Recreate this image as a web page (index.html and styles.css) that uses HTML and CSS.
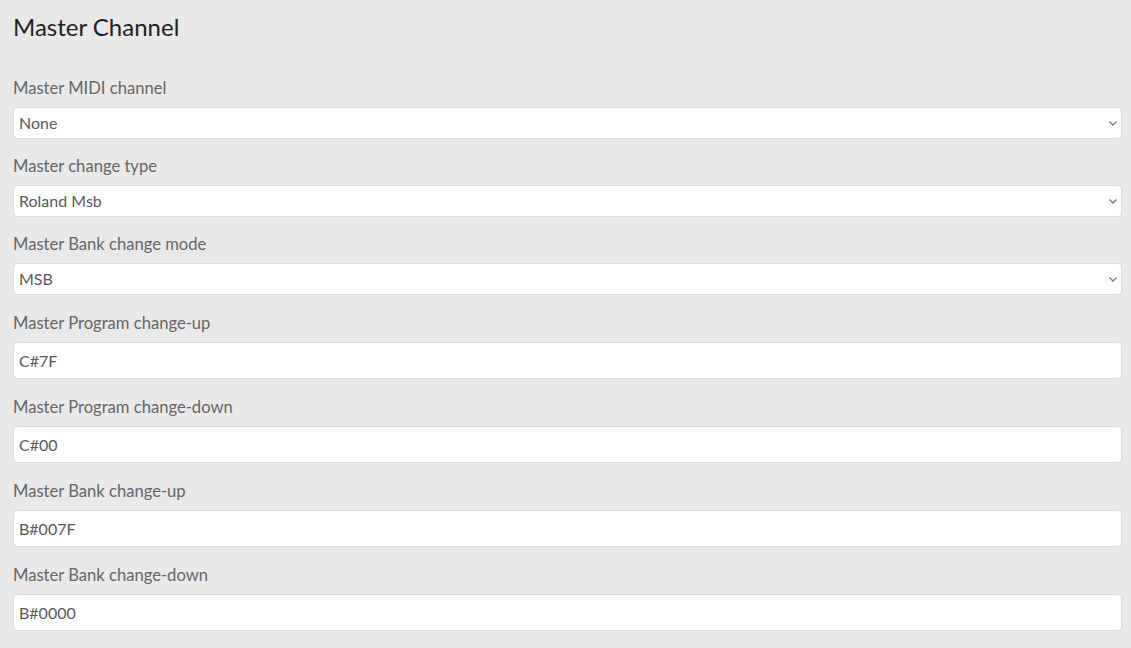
FILE: index.html
```html
<!DOCTYPE html>
<html lang="en">
<head>
<meta charset="utf-8">
<title>Master Channel</title>
<link rel="stylesheet" href="styles.css">
</head>
<body>
<main class="page">
  <h2 class="title">Master Channel</h2>

  <div class="field field-select">
    <label class="label" for="midi">Master MIDI channel</label>
    <div class="select-wrap">
      <select id="midi" class="control select"><option>None</option></select>
      <svg class="chevron" width="8" height="5" viewBox="0 0 8 5"><path d="M0.5 0.5 L4 4 L7.5 0.5" fill="none" stroke="#777" stroke-width="1.3"/></svg>
    </div>
  </div>

  <div class="field field-select">
    <label class="label" for="ctype">Master change type</label>
    <div class="select-wrap">
      <select id="ctype" class="control select"><option>Roland Msb</option></select>
      <svg class="chevron" width="8" height="5" viewBox="0 0 8 5"><path d="M0.5 0.5 L4 4 L7.5 0.5" fill="none" stroke="#777" stroke-width="1.3"/></svg>
    </div>
  </div>

  <div class="field field-select">
    <label class="label" for="bmode">Master Bank change mode</label>
    <div class="select-wrap">
      <select id="bmode" class="control select"><option>MSB</option></select>
      <svg class="chevron" width="8" height="5" viewBox="0 0 8 5"><path d="M0.5 0.5 L4 4 L7.5 0.5" fill="none" stroke="#777" stroke-width="1.3"/></svg>
    </div>
  </div>

  <div class="field field-input">
    <label class="label" for="pup">Master Program change-up</label>
    <input id="pup" class="control input" type="text" value="C#7F">
  </div>

  <div class="field field-input">
    <label class="label" for="pdown">Master Program change-down</label>
    <input id="pdown" class="control input" type="text" value="C#00">
  </div>

  <div class="field field-input">
    <label class="label" for="bup">Master Bank change-up</label>
    <input id="bup" class="control input" type="text" value="B#007F">
  </div>

  <div class="field field-input">
    <label class="label" for="bdown">Master Bank change-down</label>
    <input id="bdown" class="control input" type="text" value="B#0000">
  </div>
</main>
</body>
</html>
```

FILE: styles.css
```css
html, body {
  margin: 0;
  padding: 0;
  background: #e9e9e9;
}

body {
  font-family: Lato, "Open Sans", sans-serif;
  color: #555;
}

.page {
  padding: 13px 9px 0 13px;
}

.title {
  margin: 0 0 34px;
  font-size: 24px;
  font-weight: 400;
  line-height: 1.2;
  color: #222;
}

.field {
  display: flex;
  flex-direction: column;
  margin: 0 0 15px;
}

.field-input {
  margin-top: 16px;
  margin-bottom: 16px;
}

.label {
  display: block;
  font-size: 16.6px;
  line-height: 24px;
  margin-bottom: 7px;
  color: #666;
}

.select-wrap {
  position: relative;
}

.control {
  box-sizing: border-box;
  width: 100%;
  margin: 0;
  display: block;
  background: #fff;
  border: 1px solid #dcdcdc;
  border-radius: 4px;
  font-family: Lato, "Open Sans", sans-serif;
  font-size: 16px;
  color: #5a5a5a;
  padding: 0 5px;
  outline: none;
}

.select {
  height: 32px;
  appearance: none;
  -webkit-appearance: none;
}

.input {
  height: 37px;
}

.chevron {
  position: absolute;
  right: 5px;
  top: 14px;
  pointer-events: none;
}
```
